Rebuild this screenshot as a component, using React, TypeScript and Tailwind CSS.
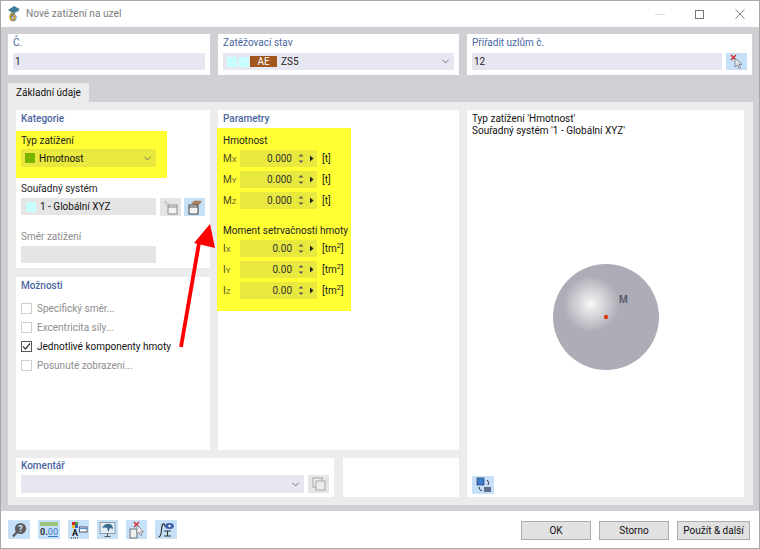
import { ChevronDown } from 'lucide-react';

const font = { fontFamily: 'Roboto, "Noto Sans", sans-serif' };

function Spin() {
  return (
    <div className="flex items-center gap-[5px] pr-[3px]">
      <svg width="6" height="13" viewBox="0 0 6 13" fill="#555">
        <path d="M3 2 L5.4 4.6 H.6 Z" />
        <path d="M3 11 L5.4 8.4 H.6 Z" />
      </svg>
      <svg width="5" height="7" viewBox="0 0 5 7" fill="#222">
        <path d="M1 .5 L4.5 3.5 L1 6.5 Z" />
      </svg>
    </div>
  );
}

function ParamRow({ axis, sub, value, unit }: { axis: string; sub: string; value: string; unit: React.ReactNode }) {
  return (
    <div className="flex h-[17px] items-center">
      <div className="w-[17px] pt-px text-[#4a4a20]">
        {axis}
        <span className="text-[8px] text-[#66663a]">{sub}</span>
      </div>
      <div className="flex h-[17px] w-[77px] items-center justify-end bg-[#e8e83e]">
        <span className="mr-[6px] pt-px text-[#333]">{value}</span>
        <Spin />
      </div>
      <div className="ml-[5px] pt-px text-[#222]">{unit}</div>
    </div>
  );
}

function Check({ label, checked }: { label: string; checked?: boolean }) {
  return (
    <div className="flex h-[19px] items-center gap-[5px]">
      <div
        className={
          checked
            ? 'flex h-[11px] w-[11px] items-center justify-center border border-[#555] bg-white'
            : 'h-[11px] w-[11px] border border-[#cfcfcf] bg-white'
        }
      >
        {checked && (
          <svg width="9" height="9" viewBox="0 0 9 9" fill="none" stroke="#333" strokeWidth="1.2">
            <path d="M1 4.5 L3.5 7 L8 1.5" />
          </svg>
        )}
      </div>
      <span className={checked ? 'text-[#111]' : 'text-[#8e8e8e]'}>{label}</span>
    </div>
  );
}

function IconBtn({ children, gray }: { children: React.ReactNode; gray?: boolean }) {
  return (
    <div className={gray ? 'flex h-[18px] w-[21px] items-center justify-center bg-[#e5e5e5]' : 'flex h-[18px] w-[21px] items-center justify-center bg-[#c6e1f7]'}>
      {children}
    </div>
  );
}

function PickerIcon() {
  return (
    <svg width="16" height="16" viewBox="0 0 16 16">
      <path d="M2 1 L7 6 M7 1 L2 6" stroke="#d8232a" strokeWidth="1.4" />
      <path d="M6 4 L6 13 L8.4 11 L10 14.5 L11.6 13.7 L10 10.4 L13 10.4 Z" fill="#e4e4e8" stroke="#77777c" strokeWidth=".8" />
    </svg>
  );
}

function BottomIcons() {
  return (
    <div className="flex gap-2">
      <div className="flex h-[19px] w-[22px] items-center justify-center bg-[#c6e1f7]">
        <svg width="16" height="16" viewBox="0 0 16 16">
          <circle cx="9.5" cy="6.5" r="5.6" fill="#5c5c60" />
          <path d="M6 10 L2 14.5" stroke="#5c5c60" strokeWidth="2.4" />
          <text x="9.5" y="9.8" textAnchor="middle" fontSize="9" fontWeight="700" fill="#d5e6f5">?</text>
        </svg>
      </div>
      <div className="flex h-[19px] w-[22px] flex-col items-center justify-center bg-[#c6e1f7]">
        <div className="h-[4px] w-[18px] bg-[#9cc77a]" />
        <div className="text-[9px] leading-[12px] font-bold text-[#333]">
          0.<span className="font-normal text-[#3b78c4] underline">00</span>
        </div>
      </div>
      <div className="flex h-[19px] w-[21px] items-center justify-center bg-[#c6e1f7]">
        <svg width="18" height="18" viewBox="0 0 18 18">
          <rect x="2" y="1" width="3" height="3" fill="#d8232a" />
          <rect x="5" y="1" width="3" height="3" fill="#3f9b3f" />
          <rect x="2" y="4" width="3" height="3" fill="#e8c020" />
          <rect x="5" y="4" width="3" height="3" fill="#3b5fc4" />
          <rect x="9.5" y="6" width="7.5" height="5" fill="#fff" stroke="#335" strokeWidth=".8" />
          <path d="M9.5 7.5 H17" stroke="#5b8bd0" strokeWidth="1.2" />
          <text x="5" y="15" textAnchor="middle" fontSize="9" fontWeight="700" fill="#222">A</text>
          <path d="M1 17 H9" stroke="#333" strokeWidth="1" strokeDasharray="1 1" />
        </svg>
      </div>
      <div className="flex h-[19px] w-[21px] items-center justify-center bg-[#c6e1f7]">
        <svg width="17" height="17" viewBox="0 0 17 17">
          <rect x="1" y="1.5" width="15" height="11" fill="#e6eef5" stroke="#8d99a6" />
          <path d="M3 7 Q6 2 11 3 Q14 4 14 8 L11 7 L9.5 11 L8 7 Q5 6 3 7 Z" fill="#3d6f93" />
          <path d="M8.5 12.5 V15.5 M5.5 15.5 H11.5" stroke="#555" />
        </svg>
      </div>
      <div className="flex h-[19px] w-[21px] items-center justify-center bg-[#c6e1f7]">
        <svg width="17" height="18" viewBox="0 0 17 18">
          <path d="M6 1 L11 6 M11 1 L6 6" stroke="#d8232a" strokeWidth="1.4" />
          <rect x="2" y="8" width="7" height="9" fill="#eee" stroke="#555" strokeWidth=".8" />
          <path d="M9 4 L9 13 L11 11.4 L12.6 14.6 L14 14 L12.6 10.8 L15.5 10.8 Z" fill="#eeeef2" stroke="#77777c" strokeWidth=".7" />
        </svg>
      </div>
      <div className="flex h-[19px] w-[22px] items-center justify-center bg-[#c6e1f7]">
        <svg width="18" height="18" viewBox="0 0 18 18">
          <path d="M8 6 Q8 2 6 3 Q4.8 4 4.5 9 Q4 16 1.5 16" fill="none" stroke="#222" strokeWidth="1.1" />
          <path d="M7 10 H14 M7 15 H14 M10.5 10 V15" stroke="#333" strokeWidth="1.1" />
          <ellipse cx="12.5" cy="5" rx="4.4" ry="3" fill="#3b5fa8" />
          <circle cx="12.5" cy="5" r="1.2" fill="#fff" />
        </svg>
      </div>
    </div>
  );
}

export default function App() {
  return (
    <div style={font} className="relative flex h-[549px] w-[760px] flex-col overflow-hidden border border-[#a9a9a9] bg-white text-[10px] leading-[12px]">
      <div className="flex h-[26px] shrink-0 items-center pl-[6px] text-[10.2px] text-[#7d7d7d]">
        <svg width="13" height="18" viewBox="0 0 13 18" className="mr-[6px]">
          <text x="6" y="15.5" textAnchor="middle" fontSize="12" fontWeight="900" fill="#e8b020" stroke="#27507c" strokeWidth=".5">6</text>
          <path d="M1 5 L7 1 L12.5 4 L11 6.5 L5 7.5 Z" fill="#3f7c96" />
        </svg>
        Nové zatížení na uzel
        <div className="ml-auto flex items-center pr-[14px]">
          <div className="mr-[30px] h-px w-[10px] bg-[#dddddd]" />
          <div className="mr-[31px] h-[9px] w-[9px] border border-[#777]" />
          <svg width="10" height="10" viewBox="0 0 10 10" stroke="#777" strokeWidth=".9">
            <path d="M.5 .5 L9.5 9.5 M9.5 .5 L.5 9.5" />
          </svg>
        </div>
      </div>

      <div className="flex h-[484px] shrink-0 flex-col bg-[#d0d0d4] pr-[6px] pl-[7px] pt-[7px]">
        <div className="flex h-[41px] shrink-0 gap-2">
          <div className="w-[202px] bg-white px-[5px] pt-[3px]">
            <div className="h-[16px] text-[#4a66a0]">Č.</div>
            <div className="flex h-[17px] items-center bg-[#e6e7f1] pt-px pl-[2px] text-[#222]">1</div>
          </div>
          <div className="w-[241px] bg-white px-[5px] pt-[3px]">
            <div className="h-[16px] text-[#4a66a0]">Zatěžovací stav</div>
            <div className="flex h-[17px] items-center bg-[#e6e7f1] pl-[4px] text-[#222]">
              <div className="h-[10px] w-[10px] bg-[#c8ffff]" />
              <div className="ml-[2px] h-[10px] w-[10px] bg-[#c8ffff]" />
              <div className="ml-[1px] flex h-[11px] w-[27px] items-center justify-center bg-[#a0561e] text-white">AE</div>
              <span className="ml-[4px] pt-px">ZS5</span>
              <ChevronDown className="mr-[3px] ml-auto h-[11px] w-[11px] text-[#666]" />
            </div>
          </div>
          <div className="w-[285px] bg-white px-[5px] pt-[3px]">
            <div className="h-[16px] text-[#4a66a0]">Přiřadit uzlům č.</div>
            <div className="flex h-[17px] gap-[4px]">
              <div className="flex w-[250px] items-center bg-[#e6e7f1] pt-px pl-[2px] text-[#222]">12</div>
              <div className="flex h-[17px] w-[21px] items-center justify-center bg-[#c6e1f7]">
                <PickerIcon />
              </div>
            </div>
          </div>
        </div>

        <div className="mt-2 flex h-[19px] w-[81px] shrink-0 items-center justify-center rounded-t-[1px] bg-[#ececec] text-[#111]">
          Základní údaje
        </div>

        <div className="flex h-[403px] shrink-0 gap-2 bg-[#ececec] p-2">
          <div className="flex w-[443px] flex-col gap-2">
            <div className="flex h-[340px] gap-2">
              <div className="flex w-[194px] flex-col gap-[9px]">
                <div className="h-[158px] bg-white">
                  <div className="h-[21px] pt-[3px] pl-[5px] font-medium text-[#4a66a0]">Kategorie</div>
                  <div className="h-[47px] w-[151px] bg-[#ffff33] px-[5px] pt-[3px]">
                    <div className="h-[15px] pt-px text-[#222]">Typ zatížení</div>
                    <div className="flex h-[18px] w-[135px] items-center bg-[#e8e83e] pl-[4px]">
                      <div className="h-[10px] w-[10px] bg-[#78b400]" />
                      <span className="ml-[4px] pt-px text-[#111]">Hmotnost</span>
                      <ChevronDown className="mr-[3px] ml-auto h-[11px] w-[11px] text-[#666]" />
                    </div>
                  </div>
                  <div className="mt-[3px] px-[5px]">
                    <div className="h-[17px] pt-[2px] text-[#222]">Souřadný systém</div>
                    <div className="flex h-[17px] gap-[4px]">
                      <div className="flex w-[135px] items-center bg-[#e5e5e5] pl-[5px] text-[#111]">
                        <div className="h-[10px] w-[10px] bg-[#c8ffff]" />
                        <span className="ml-[4px] pt-px">1 - Globální XYZ</span>
                      </div>
                      <IconBtn gray>
                        <svg width="17" height="16" viewBox="0 0 17 16">
                          <path d="M4 0 L5 3 L8 3.5 L5 4.5 L4 7.5 L3 4.5 L0.5 3.5 L3 3 Z" fill="#c9c9c9" />
                          <rect x="6" y="6" width="9" height="9" fill="#f2f2f2" stroke="#8a8a8a" />
                          <path d="M6 8 H15" stroke="#8a8a8a" />
                        </svg>
                      </IconBtn>
                      <div className="-ml-px">
                        <IconBtn>
                          <svg width="17" height="16" viewBox="0 0 17 16">
                            <path d="M5 4 L9 1.5 L16 2 L14 5 L9 7 Z" fill="#a8825c" />
                            <rect x="3" y="6" width="9" height="9" fill="#f4f4f4" stroke="#444" />
                            <path d="M3 8 H12" stroke="#444" />
                          </svg>
                        </IconBtn>
                      </div>
                    </div>
                    <div className="mt-[16px] h-[15px] text-[#8e8e8e]">Směr zatížení</div>
                    <div className="h-[17px] w-[135px] bg-[#e5e5e5]" />
                  </div>
                </div>
                <div className="flex-1 bg-white pl-[5px]">
                  <div className="h-[22px] pt-[3px] font-medium text-[#4a66a0]">Možnosti</div>
                  <Check label="Specifický směr..." />
                  <Check label="Excentricita síly..." />
                  <Check label="Jednotlivé komponenty hmoty" checked />
                  <Check label="Posunuté zobrazení..." />
                </div>
              </div>

              <div className="w-[241px] bg-white">
                <div className="h-[18px] pt-[3px] pl-[5px] font-medium text-[#4a66a0]">Parametry</div>
                <div className="-ml-px flex h-[183px] w-[134px] flex-col bg-[#ffff33] pl-[6px] pt-[6px]">
                  <div className="h-[16px] pt-px text-[#222]">Hmotnost</div>
                  <div className="flex flex-col gap-[4px]">
                    <ParamRow axis="M" sub="X" value="0.000" unit="[t]" />
                    <ParamRow axis="M" sub="Y" value="0.000" unit="[t]" />
                    <ParamRow axis="M" sub="Z" value="0.000" unit="[t]" />
                  </div>
                  <div className="mt-[15px] h-[16px] whitespace-nowrap pt-px text-[#222]">Moment setrvačnosti hmoty</div>
                  <div className="flex flex-col gap-[4px]">
                    <ParamRow axis="I" sub="X" value="0.00" unit={<>[tm<sup>2</sup>]</>} />
                    <ParamRow axis="I" sub="Y" value="0.00" unit={<>[tm<sup>2</sup>]</>} />
                    <ParamRow axis="I" sub="Z" value="0.00" unit={<>[tm<sup>2</sup>]</>} />
                  </div>
                </div>
              </div>
            </div>

            <div className="flex h-[39px] gap-[9px]">
              <div className="w-[318px] bg-white px-[5px] pt-[2px]">
                <div className="h-[15px] font-medium text-[#4a66a0]">Komentář</div>
                <div className="flex h-[18px] gap-[4px]">
                  <div className="flex w-[284px] items-center justify-end bg-[#e6e7f1] pr-[3px]">
                    <ChevronDown className="h-[11px] w-[11px] text-[#666]" />
                  </div>
                  <div className="flex h-[18px] w-[21px] items-center justify-center bg-[#e5e5e5]">
                    <svg width="14" height="14" viewBox="0 0 14 14" fill="#ececec" stroke="#a5a5a5">
                      <rect x="1" y="1" width="9" height="9" />
                      <rect x="4" y="4" width="9" height="9" />
                    </svg>
                  </div>
                </div>
              </div>
              <div className="w-[116px] bg-white" />
            </div>
          </div>

          <div className="flex w-[277px] flex-col bg-white px-[5px] pt-[3px] pb-[3px] text-[#111]">
            <div>Typ zatížení 'Hmotnost'</div>
            <div>Souřadný systém '1 - Globální XYZ'</div>
            <div className="flex flex-1 items-center justify-center pt-[20px]">
              <svg width="110" height="110" viewBox="0 0 110 110">
                <defs>
                  <radialGradient id="glow" cx="40" cy="42" r="28" gradientUnits="userSpaceOnUse">
                    <stop offset="0" stopColor="#f8f8f8" />
                    <stop offset="1" stopColor="#adadb7" />
                  </radialGradient>
                </defs>
                <circle cx="55" cy="55" r="53" fill="#adadb7" />
                <circle cx="40" cy="42" r="28" fill="url(#glow)" />
                <circle cx="55" cy="55" r="2.2" fill="#d63a10" />
                <text x="68" y="41" fontSize="10" fontWeight="700" fill="#5c5c6c">M</text>
              </svg>
            </div>
            <div className="flex h-[18px] w-[22px] items-center justify-center bg-[#c6e1f7]">
              <svg width="17" height="16" viewBox="0 0 17 16">
                <rect x="2" y="1" width="7" height="7" fill="#3f7fd0" stroke="#224" strokeWidth=".6" />
                <rect x="9" y="10" width="7" height="5" fill="#5c6f8c" />
                <path d="M12 3 Q15 5 13 8 M4 10 Q4 13 7 14" fill="none" stroke="#333" />
              </svg>
            </div>
          </div>
        </div>
      </div>

      <div className="flex flex-1 items-start justify-between pt-[9px] pr-[9px] pl-[7px]">
        <BottomIcons />
        <div className="flex gap-2 pt-px text-[#111]">
          <button className="h-[19px] w-[70px] border border-[#adadad] bg-[#e1e1e1]">OK</button>
          <button className="h-[19px] w-[70px] border border-[#adadad] bg-[#e1e1e1]">Storno</button>
          <button className="h-[19px] w-[73px] border border-[#adadad] bg-[#e1e1e1]">Použít &amp; další</button>
        </div>
      </div>

      <svg width="40" height="126" viewBox="0 0 40 126" className="absolute top-[222px] left-[177px]">
        <path d="M3 124 L21 20" stroke="#ff0000" strokeWidth="3.8" />
        <path d="M32 1 L16 20 L37 25 Z" fill="#ff0000" />
      </svg>
    </div>
  );
}
